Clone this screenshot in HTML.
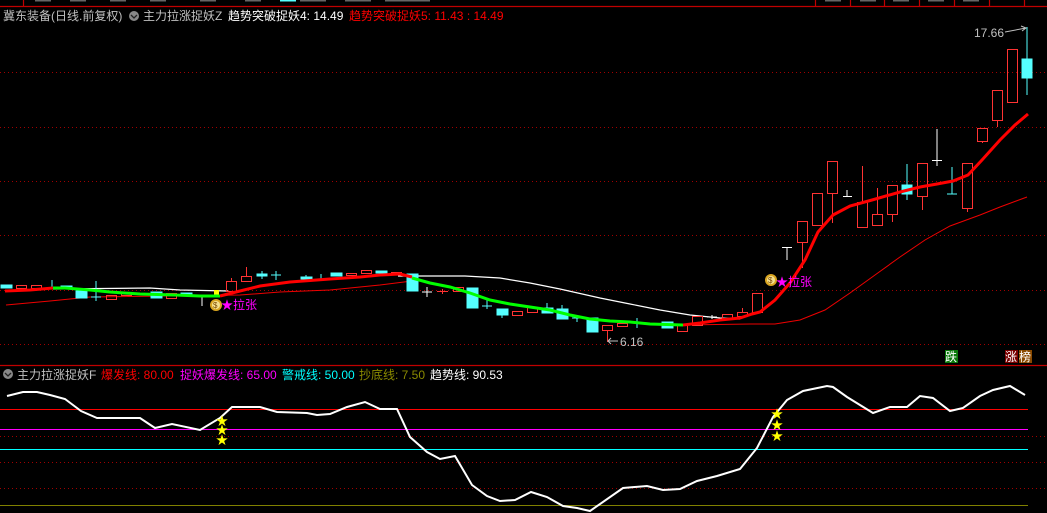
<!DOCTYPE html>
<html><head><meta charset="utf-8"><style>
html,body{margin:0;padding:0;background:#000;width:1047px;height:513px;overflow:hidden}
svg{display:block}
text{font-family:"Liberation Sans","Noto Sans CJK SC",sans-serif;font-size:12px}
</style></head><body>
<svg width="1047" height="513" viewBox="0 0 1047 513" xmlns="http://www.w3.org/2000/svg">
<rect width="1047" height="513" fill="#000"/>
<g stroke="#c00000" stroke-width="1.2" fill="none">
<line x1="0" y1="6.5" x2="1047" y2="6.5"/>
<line x1="23.5" y1="0" x2="23.5" y2="6"/>
<line x1="815.5" y1="0" x2="815.5" y2="6"/><line x1="850.5" y1="0" x2="850.5" y2="6"/>
<line x1="884.5" y1="0" x2="884.5" y2="6"/><line x1="919.5" y1="0" x2="919.5" y2="6"/>
<line x1="954.5" y1="0" x2="954.5" y2="6"/><line x1="989.5" y1="0" x2="989.5" y2="6"/>
<line x1="1024.5" y1="0" x2="1024.5" y2="6"/>
</g>
<g fill="#666"><rect x="35" y="0" width="16" height="1.5"/><rect x="70" y="0" width="16" height="1.5"/><rect x="110" y="0" width="16" height="1.5"/><rect x="150" y="0" width="16" height="1.5"/><rect x="200" y="0" width="16" height="1.5"/><rect x="245" y="0" width="16" height="1.5"/><rect x="300" y="0" width="26" height="1.5"/><rect x="345" y="0" width="26" height="1.5"/><rect x="385" y="0" width="45" height="1.5"/><rect x="825" y="0" width="16" height="1.5"/><rect x="860" y="0" width="16" height="1.5"/><rect x="893" y="0" width="16" height="1.5"/><rect x="928" y="0" width="16" height="1.5"/><rect x="963" y="0" width="16" height="1.5"/></g>
<rect x="280" y="0" width="16" height="1.5" fill="#5ff"/>
<text x="3" y="20" fill="#c0c0c0">冀东装备(日线.前复权)</text>
<circle cx="134" cy="16" r="5" fill="#888"/><path d="M131 15l3 3 3-3" stroke="#222" stroke-width="1.3" fill="none"/>
<text x="143" y="20" fill="#c0c0c0">主力拉涨捉妖Z</text>
<text x="228" y="20" fill="#fff">趋势突破捉妖4: 14.49</text>
<text x="349" y="20" fill="#f00">趋势突破捉妖5: 11.43 : 14.49</text>
<g stroke="#a00000" stroke-dasharray="1,3" stroke-width="1">
<line x1="0" y1="72.5" x2="1047" y2="72.5"/><line x1="0" y1="127.5" x2="1047" y2="127.5"/>
<line x1="0" y1="181.5" x2="1047" y2="181.5"/><line x1="0" y1="235.5" x2="1047" y2="235.5"/>
<line x1="0" y1="290.5" x2="1047" y2="290.5"/><line x1="0" y1="344.5" x2="1047" y2="344.5"/>
<line x1="0" y1="436.5" x2="1047" y2="436.5"/><line x1="0" y1="462.5" x2="1047" y2="462.5"/><line x1="0" y1="488.5" x2="1047" y2="488.5"/>
</g>
<line x1="0" y1="365.5" x2="1047" y2="365.5" stroke="#c00000" stroke-width="1.2"/>
<polyline fill="none" stroke="#fff" stroke-width="1.2" points="53,289 150,288 180,290 228,291"/>
<polyline fill="none" stroke="#fff" stroke-width="1.2" points="398,276 465,276 500,278 530,283 560,289 600,298 630,304 660,310 690,315 720,318 740,319"/>
<polyline fill="none" stroke="#e00" stroke-width="1" points="6,305 50,301 90,297 240,295 280,292 330,290 380,285 420,280"/>
<polyline fill="none" stroke="#e00" stroke-width="1" points="683,325 750,324 775,324 800,320 825,310 850,293 875,275 900,257 925,240 950,226 980,215 1000,207 1027,197"/>
<g stroke-width="1">
<g fill="#5ff" stroke="#5ff">
<rect x="1" y="285" width="11" height="3"/><line x1="52" y1="280" x2="52" y2="288"/><rect x="61" y="286" width="11" height="3"/>
<rect x="76" y="291" width="11" height="7"/><line x1="96" y1="281" x2="96" y2="301"/><line x1="91" y1="290" x2="101" y2="290"/><line x1="91" y1="297" x2="101" y2="297"/>
<rect x="151" y="292" width="11" height="6"/><rect x="181" y="293" width="11" height="2"/>
<rect x="257" y="274" width="10" height="2"/><line x1="262" y1="271" x2="262" y2="279"/><line x1="276" y1="271" x2="276" y2="280"/><line x1="271" y1="275" x2="281" y2="275"/>
<rect x="301" y="277" width="11" height="2"/><line x1="306" y1="275" x2="306" y2="280"/><line x1="321" y1="274" x2="321" y2="279"/>
<rect x="331" y="273" width="11" height="3"/><rect x="376" y="271" width="11" height="2"/><rect x="407" y="274" width="11" height="17"/>
<rect x="467" y="288" width="11" height="20"/><line x1="487" y1="300" x2="487" y2="309"/><line x1="482" y1="306" x2="492" y2="306"/>
<rect x="497" y="309" width="11" height="6"/><line x1="502" y1="315" x2="502" y2="318"/>
<rect x="542" y="308" width="11" height="5"/><line x1="547" y1="303" x2="547" y2="313"/>
<rect x="557" y="309" width="11" height="10"/><line x1="562" y1="305" x2="562" y2="319"/>
<line x1="577" y1="315" x2="577" y2="322"/><line x1="572" y1="318" x2="582" y2="318"/>
<rect x="587" y="318" width="11" height="14"/><line x1="637" y1="318" x2="637" y2="328"/><line x1="632" y1="323" x2="642" y2="323"/>
<rect x="662" y="322" width="11" height="6"/>
<rect x="902" y="185" width="10" height="9"/><line x1="907" y1="164" x2="907" y2="200"/>
<line x1="952" y1="167" x2="952" y2="194"/><line x1="947" y1="194" x2="957" y2="194"/>
<rect x="1022" y="59" width="10" height="19"/><line x1="1027" y1="27" x2="1027" y2="95"/>
</g>
<g fill="none" stroke="#f33">
<rect x="16.5" y="285.5" width="10" height="3"/><rect x="31.5" y="285.5" width="10" height="3"/>
<rect x="106.5" y="295.5" width="10" height="4"/><rect x="121.5" y="293.5" width="10" height="2"/><rect x="166.5" y="293.5" width="10" height="5"/>
<rect x="226.5" y="281.5" width="10" height="10"/><line x1="231.5" y1="278" x2="231.5" y2="281"/>
<rect x="241.5" y="276.5" width="10" height="5"/><line x1="246.5" y1="267" x2="246.5" y2="276"/>
<rect x="346.5" y="273.5" width="10" height="2"/><rect x="361.5" y="270.5" width="10" height="3"/><rect x="391.5" y="272.5" width="10" height="2"/>
<line x1="437" y1="291.5" x2="448" y2="291.5"/><line x1="442.5" y1="289" x2="442.5" y2="294"/>
<rect x="453.5" y="287.5" width="10" height="4"/><rect x="512.5" y="311.5" width="10" height="4"/><rect x="527.5" y="307.5" width="10" height="5"/>
<rect x="602.5" y="325.5" width="10" height="5"/><line x1="607.5" y1="330" x2="607.5" y2="342"/>
<rect x="617.5" y="323.5" width="10" height="3"/><rect x="677.5" y="325.5" width="10" height="6"/>
<rect x="692.5" y="316.5" width="10" height="9"/><rect x="722.5" y="314.5" width="10" height="4"/><rect x="737.5" y="312.5" width="10" height="4"/><line x1="742.5" y1="308" x2="742.5" y2="312"/>
<rect x="752.5" y="293.5" width="10" height="19"/>
<rect x="797.5" y="221.5" width="10" height="21"/><line x1="802.5" y1="242" x2="802.5" y2="268"/>
<rect x="812.5" y="193.5" width="10" height="32"/><rect x="827.5" y="161.5" width="10" height="32"/><line x1="832.5" y1="193" x2="832.5" y2="223"/>
<rect x="857.5" y="202.5" width="10" height="25"/><line x1="862.5" y1="166" x2="862.5" y2="202"/>
<rect x="872.5" y="214.5" width="10" height="11"/><line x1="877.5" y1="188" x2="877.5" y2="214"/>
<rect x="887.5" y="185.5" width="10" height="29"/><line x1="892.5" y1="214" x2="892.5" y2="222"/>
<rect x="917.5" y="163.5" width="10" height="33"/><line x1="922.5" y1="196" x2="922.5" y2="210"/>
<rect x="962.5" y="163.5" width="10" height="45"/><line x1="967.5" y1="208" x2="967.5" y2="212"/>
<rect x="977.5" y="128.5" width="10" height="13"/><line x1="982.5" y1="141" x2="982.5" y2="143"/>
<rect x="992.5" y="90.5" width="10" height="30"/><line x1="997.5" y1="120" x2="997.5" y2="127"/>
<rect x="1007.5" y="49.5" width="10" height="53"/>
</g>
<g stroke="#fff" fill="none">
<line x1="202" y1="297" x2="202" y2="306"/><line x1="427" y1="287" x2="427" y2="297"/><line x1="422" y1="292" x2="432" y2="292"/>
<line x1="712" y1="315" x2="712" y2="319"/><line x1="707" y1="317" x2="717" y2="317"/>
<line x1="787" y1="247" x2="787" y2="260"/><line x1="782" y1="247.5" x2="792" y2="247.5"/>
<line x1="847" y1="190" x2="847" y2="196"/><line x1="843" y1="196.5" x2="852" y2="196.5"/>
<line x1="937" y1="129" x2="937" y2="166"/><line x1="932" y1="160.5" x2="942" y2="160.5"/>
</g>
<rect x="214" y="290" width="5" height="7" fill="#ff0"/>
</g>
<polyline fill="none" stroke="#f00" stroke-width="3" points="5,291 30,290 53,288"/>
<polyline fill="none" stroke="#0f0" stroke-width="3" points="53,288 65,288 90,290 110,292 140,294 175,295 200,296 220,296"/>
<polyline fill="none" stroke="#f00" stroke-width="3" points="220,296 240,291 260,286 290,282 330,279 360,277 380,275 400,274 412,277"/>
<polyline fill="none" stroke="#0f0" stroke-width="3" points="412,278 430,283 450,287 470,293 490,300 510,304 530,307 550,310 570,315 590,319 610,321 630,322 650,324 683,325"/>
<polyline fill="none" stroke="#f00" stroke-width="3" points="683,325 700,323 720,320 740,318 752,314 760,312 775,300 790,283 805,260 818,232 833,215 850,206 872,200 900,192 920,187 937,184 953,181 968,175 982,160 1000,140 1015,125 1028,114"/>
<text x="974" y="37" fill="#c0c0c0">17.66</text>
<path d="M1005 32 L1026 28 M1021 26 L1026 28 L1022 31" stroke="#c0c0c0" fill="none"/>
<path d="M608 341 L618 341 M611 338 L608 341 L611 344" stroke="#c0c0c0" fill="none"/>
<text x="620" y="346" fill="#c0c0c0">6.16</text>
<g>
<circle cx="216" cy="305" r="6" fill="#d9a520"/><circle cx="216" cy="305" r="4" fill="#f5e090"/><text x="213" y="308" style="font-size:8px" fill="#7a4a00">$</text>
<text x="221" y="309" fill="#f0f" style="font-size:12px">★拉张</text>
<circle cx="771" cy="280" r="6" fill="#d9a520"/><circle cx="771" cy="280" r="4" fill="#f5e090"/><text x="768" y="283" style="font-size:8px" fill="#7a4a00">$</text>
<text x="776" y="286" fill="#f0f" style="font-size:12px">★拉张</text>
</g>
<rect x="945" y="350" width="13" height="13" fill="#0a7a0a"/><text x="945" y="361" fill="#fff">跌</text>
<rect x="1005" y="350" width="13" height="13" fill="#7a0000"/><text x="1005" y="361" fill="#fff">涨</text>
<rect x="1019" y="350" width="13" height="13" fill="#8a4a00"/><text x="1019" y="361" fill="#fff">榜</text>
<circle cx="8" cy="374" r="5" fill="#888"/><path d="M5 373l3 3 3-3" stroke="#222" stroke-width="1.3" fill="none"/>
<text x="17" y="379" fill="#c0c0c0">主力拉涨捉妖F</text>
<text x="101" y="379" fill="#f00">爆发线: 80.00</text>
<text x="180" y="379" fill="#f0f">捉妖爆发线: 65.00</text>
<text x="282" y="379" fill="#0ff">警戒线: 50.00</text>
<text x="359" y="379" fill="#8a8a00">抄底线: 7.50</text>
<text x="430" y="379" fill="#fff">趋势线: 90.53</text>
<line x1="0" y1="409.5" x2="1028" y2="409.5" stroke="#f00"/>
<line x1="0" y1="429.5" x2="1028" y2="429.5" stroke="#f0f"/>
<line x1="0" y1="449.5" x2="1028" y2="449.5" stroke="#0ff"/>
<line x1="0" y1="505.5" x2="1028" y2="505.5" stroke="#808000"/>
<polyline fill="none" stroke="#fff" stroke-width="2" points="7,396 23,392 37,392 50,395 65,399 81,411 97,418 140,418 155,428 172,424 200,430 220,418 232,407 260,407 277,412 307,413 317,415 330,414 347,407 365,402 380,409 397,409 410,437 427,452 440,459 455,456 472,485 487,496 500,501 515,500 531,492 547,497 563,506 577,508 590,511 623,488 647,486 663,490 680,489 697,481 717,476 740,469 757,448 773,417 787,400 803,391 827,386 833,387 847,397 873,413 890,407 907,407 920,396 933,398 950,411 963,408 980,396 993,390 1010,386 1025,395"/>
<g fill="#ff0" style="font-size:11px">
<text x="216" y="425">★</text><text x="216" y="434">★</text><text x="216" y="444">★</text>
<text x="771" y="418">★</text><text x="771" y="429">★</text><text x="771" y="440">★</text>
</g>
</svg>
</body></html>
